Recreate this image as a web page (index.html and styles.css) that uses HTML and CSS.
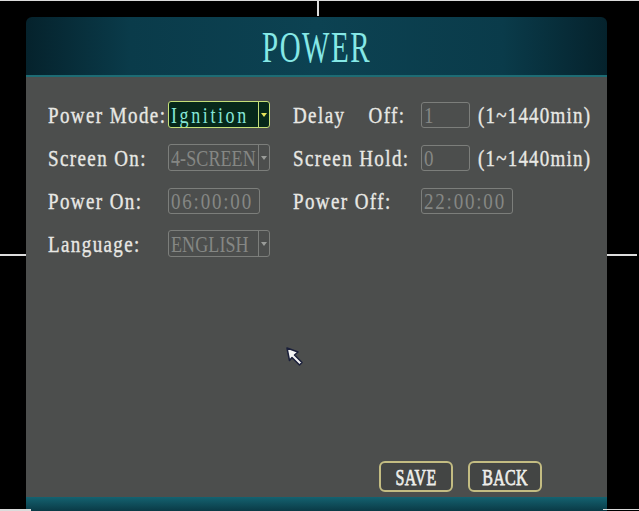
FILE: index.html
```html
<!DOCTYPE html>
<html>
<head>
<meta charset="utf-8">
<link rel="stylesheet" href="styles.css">
</head>
<body>
<div class="screen">
  <div class="panel">
    <div class="titlebar"><span class="title">POWER</span></div>
    <div class="body">
      <div class="form">
        <span class="label"><span class="t">Power Mode:</span></span>
        <span class="select active"><span class="val wide"><span class="t">Ignition</span></span><span class="arrow"></span></span>
        <span class="label spaced"><span class="t">Delay Off:</span></span>
        <span class="box short"><span class="t">1</span></span>
        <span class="label suffix"><span class="t">(1~1440min)</span></span>

        <span class="label"><span class="t">Screen On:</span></span>
        <span class="select"><span class="val"><span class="t">4-SCREEN</span></span><span class="arrow"></span></span>
        <span class="label"><span class="t">Screen Hold:</span></span>
        <span class="box short"><span class="t">0</span></span>
        <span class="label suffix"><span class="t">(1~1440min)</span></span>

        <span class="label"><span class="t">Power On:</span></span>
        <span class="box time"><span class="t">06:00:00</span></span>
        <span class="label"><span class="t">Power Off:</span></span>
        <span class="box time span2"><span class="t">22:00:00</span></span>

        <span class="label"><span class="t">Language:</span></span>
        <span class="select"><span class="val"><span class="t">ENGLISH</span></span><span class="arrow"></span></span>
      </div>
      <div class="buttons">
        <span class="btn"><span class="bt">SAVE</span></span>
        <span class="btn"><span class="bt">BACK</span></span>
      </div>
    </div>
    <div class="footer"></div>
  </div>
  <span class="line top"></span>
  <span class="line vtop"></span>
  <span class="line midl"></span>
  <span class="line midr"></span>
  <span class="line botl"></span>
  <span class="line botr"></span>
  <svg class="cursor" width="20" height="22" viewBox="0 0 20 22">
    <path d="M1 1 L12 5 L8.5 8 L16 15.5 L13.5 18 L6 10.5 L3.5 13.5 Z" fill="#f4f4f4" stroke="#1a1f3a" stroke-width="1.5" stroke-linejoin="round"/>
  </svg>
</div>
</body>
</html>
```
FILE: styles.css
```css
html, body {
  margin: 0;
  padding: 0;
  background: #000;
}
.screen {
  position: relative;
  width: 639px;
  height: 511px;
  overflow: hidden;
  background: #000;
  font-family: "Liberation Serif", "DejaVu Serif", serif;
}
.panel {
  margin-left: 26px;
  padding-top: 17px;
  width: 581px;
  display: flex;
  flex-direction: column;
}
.titlebar {
  height: 58px;
  border-radius: 6px 6px 0 0;
  background: linear-gradient(to right, #05222c, #0a3b4a 18%, #0c4252 50%, #0a3b4a 82%, #05222c);
  border-bottom: 2px solid #1d6c74;
  display: flex;
  justify-content: center;
  align-items: center;
}
.title {
  display: inline-block;
  color: #86e8e6;
  font-size: 29px;
  letter-spacing: 1.5px;
  transform: scaleY(1.5);
  padding-top: 2px;
}
.body {
  height: 420px;
  background: #4c4e4d;
  box-sizing: border-box;
  padding: 24px 65px 5px 22px;
  display: flex;
  flex-direction: column;
}
.t {
  display: inline-block;
  transform: scaleY(1.25);
  white-space: pre;
}
.form {
  display: grid;
  grid-template-columns: 120px 125px 128px 57px auto;
  grid-auto-rows: 27px;
  row-gap: 16px;
  align-items: center;
  font-size: 19px;
  letter-spacing: 1.4px;
}
.label {
  color: #e8e8e4;
  line-height: 27px;
  white-space: nowrap;
  -webkit-text-stroke: 0.3px #e8e8e4;
}
.label.spaced {
  word-spacing: 17px;
}
.label.suffix {
  letter-spacing: 1.2px;
}
.box, .select {
  box-sizing: border-box;
  height: 26px;
  border: 1.5px solid #7c7e7b;
  border-radius: 3px;
  color: #858784;
  display: flex;
  align-items: center;
  line-height: 24px;
  padding-left: 2px;
  overflow: hidden;
}
.box.time {
  letter-spacing: 1.8px;
}
.select {
  width: 102px;
  padding-left: 0;
  height: 27px;
  font-size: 18px;
  letter-spacing: 0.1px;
}
.select .val {
  flex: 1;
  padding-left: 2px;
  overflow: hidden;
  white-space: nowrap;
}
.select .val.wide {
  letter-spacing: 2.6px;
}
.select .arrow {
  width: 10px;
  height: 100%;
  border-left: 1.5px solid #7c7e7b;
  display: flex;
  align-items: center;
  justify-content: center;
}
.select .arrow::after {
  content: "";
  border-left: 3px solid transparent;
  border-right: 3px solid transparent;
  border-top: 4px solid #9a9c99;
}
.select.active {
  background: #06281a;
  border-color: #c5df78;
  color: #86e6d6;
}
.select.active .arrow {
  border-left-color: #c5df78;
}
.select.active .arrow::after {
  border-top-color: #e4e25a;
}
.box.short {
  width: 49px;
}
.box.time {
  width: 92px;
}
.span2 {
  grid-column: span 2;
}
.buttons {
  margin-top: auto;
  display: flex;
  justify-content: flex-end;
  gap: 15px;
}
.btn {
  box-sizing: border-box;
  width: 74px;
  height: 31px;
  border: 2px solid #c3bc82;
  border-radius: 6px;
  background: #434544;
  color: #eeeeea;
  font-size: 16px;
  letter-spacing: 0.3px;
  display: flex;
  align-items: center;
  justify-content: center;
}
.bt {
  display: inline-block;
  transform: scaleY(1.5);
  -webkit-text-stroke: 0.5px #eeeeea;
}
.footer {
  height: 14px;
  background: linear-gradient(to bottom, #146270, #0a3a46);
}
.line {
  position: absolute;
  background: #dcdcdc;
}
.line.top { left: 0; top: 0; width: 639px; height: 1px; }
.line.vtop { left: 317px; top: 0; width: 2px; height: 16px; }
.line.midl { left: 0; top: 254px; width: 26px; height: 2px; }
.line.midr { left: 607px; top: 254px; width: 30px; height: 2px; }
.line.botl { left: 0; top: 509px; width: 31px; height: 2px; }
.line.botr { left: 603px; top: 509px; width: 36px; height: 1px; }
.cursor {
  position: absolute;
  left: 286px;
  top: 347px;
}
```
